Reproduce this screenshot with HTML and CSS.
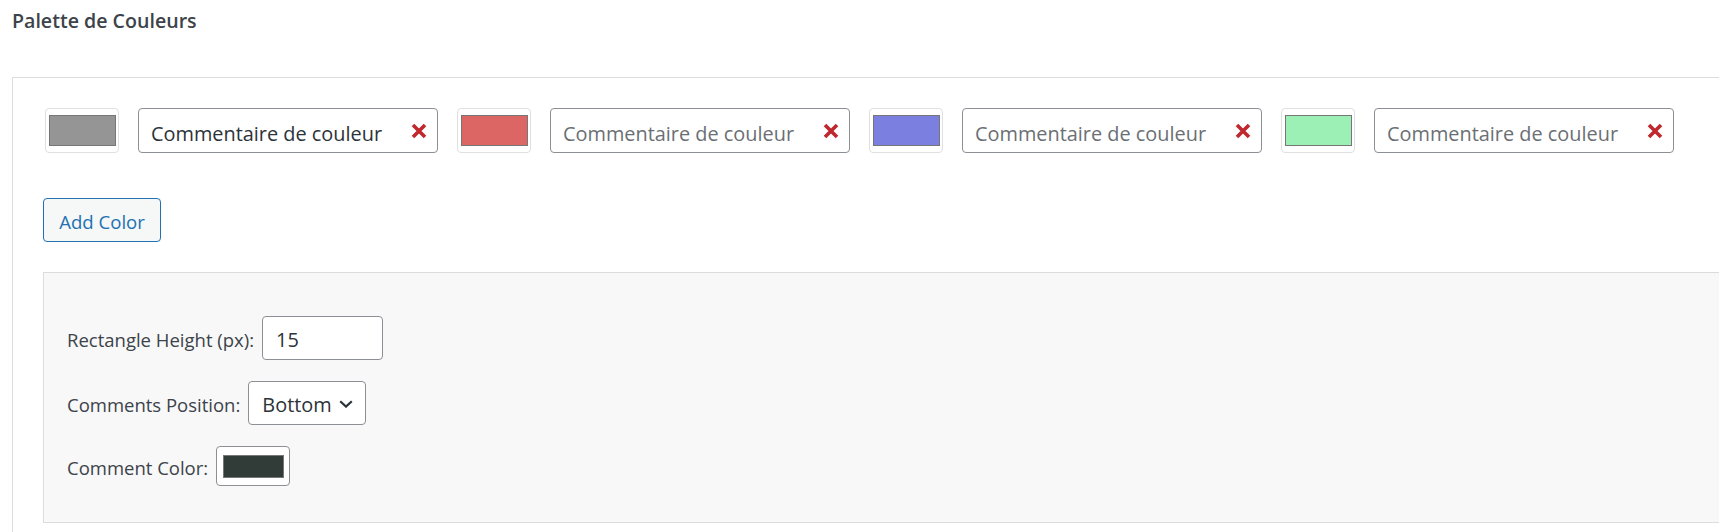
FILE: index.html
```html
<!DOCTYPE html>
<html lang="fr">
<head>
<meta charset="utf-8">
<title>Palette de Couleurs</title>
<link rel="stylesheet" href="styles.css">
</head>
<body>
<h2 class="title">Palette de Couleurs</h2>
<div class="panel">
  <div class="color-row">
    <div class="swatch"><span class="swatch-fill" style="background:#959595"></span></div>
    <div class="comment">
      <span class="comment-text filled">Commentaire de couleur</span>
      <svg class="remove" viewBox="0 0 16 16" width="16" height="16"><path d="M2 2L14 14M14 2L2 14" stroke="#c0282e" stroke-width="3.6" stroke-linecap="butt"/></svg>
    </div>
    <div class="swatch"><span class="swatch-fill" style="background:#dc6663"></span></div>
    <div class="comment">
      <span class="comment-text">Commentaire de couleur</span>
      <svg class="remove" viewBox="0 0 16 16" width="16" height="16"><path d="M2 2L14 14M14 2L2 14" stroke="#c0282e" stroke-width="3.6" stroke-linecap="butt"/></svg>
    </div>
    <div class="swatch"><span class="swatch-fill" style="background:#7b7fe0"></span></div>
    <div class="comment">
      <span class="comment-text">Commentaire de couleur</span>
      <svg class="remove" viewBox="0 0 16 16" width="16" height="16"><path d="M2 2L14 14M14 2L2 14" stroke="#c0282e" stroke-width="3.6" stroke-linecap="butt"/></svg>
    </div>
    <div class="swatch"><span class="swatch-fill" style="background:#9df0b5"></span></div>
    <div class="comment">
      <span class="comment-text">Commentaire de couleur</span>
      <svg class="remove" viewBox="0 0 16 16" width="16" height="16"><path d="M2 2L14 14M14 2L2 14" stroke="#c0282e" stroke-width="3.6" stroke-linecap="butt"/></svg>
    </div>
  </div>
  <button class="add-btn" type="button">Add Color</button>
  <div class="settings">
    <div class="setting">
      <span class="label">Rectangle Height (px):</span>
      <div class="control number">15</div>
    </div>
    <div class="setting">
      <span class="label">Comments Position:</span>
      <div class="control select">
        <span>Bottom</span>
        <svg class="chevron" viewBox="0 0 14 8" width="14" height="8"><path d="M1.2 1.2L7 6.6L12.8 1.2" fill="none" stroke="#2c3338" stroke-width="2.2"/></svg>
      </div>
    </div>
    <div class="setting">
      <span class="label">Comment Color:</span>
      <div class="control colorpick"><span class="colorpick-fill"></span></div>
    </div>
  </div>
</div>
</body>
</html>
```
FILE: styles.css
```css
html, body {
  margin: 0;
  padding: 0;
  overflow: hidden;
  background: #ffffff;
}
body {
  font-family: "Open Sans", "Noto Sans", "Liberation Sans", sans-serif;
  color: #3c434a;
}
.title {
  margin: 0;
  padding: 8px 0 0 12px;
  font-size: 19.6px;
  font-weight: 600;
  line-height: 26px;
  color: #3c434a;
}
.panel {
  margin: 43px 0 0 12px;
  width: 1800px;
  border: 1px solid #dcdcde;
  background: #fff;
  padding: 30px 0 0 30px;
  height: 520px;
}
.color-row {
  display: flex;
  align-items: center;
  gap: 19px;
  padding-left: 2px;
}
.swatch {
  box-sizing: border-box;
  width: 74px;
  height: 45px;
  border: 1px solid #e0e0e2;
  border-radius: 4px;
  display: flex;
  align-items: center;
  justify-content: center;
  background: #fff;
}
.swatch-fill {
  box-sizing: border-box;
  width: 67px;
  height: 31px;
  border: 1px solid #767676;
}
.comment {
  box-sizing: border-box;
  width: 300px;
  height: 45px;
  border: 1px solid #8c8f94;
  border-radius: 4px;
  display: flex;
  align-items: center;
  justify-content: space-between;
  padding: 0 10px 0 12px;
}
.comment-text {
  font-size: 19.9px;
  color: #6b6f74;
  margin-top: 5px;
}
.comment-text.filled {
  color: #2c3338;
}
.remove {
  display: block;
}
.add-btn {
  display: block;
  box-sizing: border-box;
  margin-top: 45px;
  width: 118px;
  height: 44px;
  border: 1px solid #2271b1;
  border-radius: 4px;
  background: #f6f7f7;
  color: #2271b1;
  font-family: inherit;
  font-size: 18.6px;
  padding: 2px 0 0;
}
.settings {
  margin-top: 30px;
  box-sizing: border-box;
  height: 251px;
  border: 1px solid #dcdcde;
  background: #f8f8f8;
  padding: 43px 0 0 23px;
  display: flex;
  flex-direction: column;
  gap: 21px;
}
.setting {
  display: flex;
  align-items: center;
  gap: 8px;
}
.label {
  font-size: 18.5px;
  color: #3c434a;
  margin-top: 2px;
}
.control {
  box-sizing: border-box;
  height: 44px;
  border: 1px solid #8c8f94;
  border-radius: 4px;
  background: #fff;
  display: flex;
  align-items: center;
  font-size: 19.9px;
  color: #2c3338;
}
.number {
  width: 121px;
  padding: 2px 0 0 13px;
}
.select {
  width: 118px;
  padding: 2px 12px 0 13px;
  justify-content: space-between;
}
.chevron {
  display: block;
}
.colorpick {
  width: 74px;
  height: 40px;
  justify-content: center;
}
.colorpick-fill {
  box-sizing: border-box;
  width: 61px;
  height: 23px;
  background: #313c38;
  border: 1px solid #777;
}
```
